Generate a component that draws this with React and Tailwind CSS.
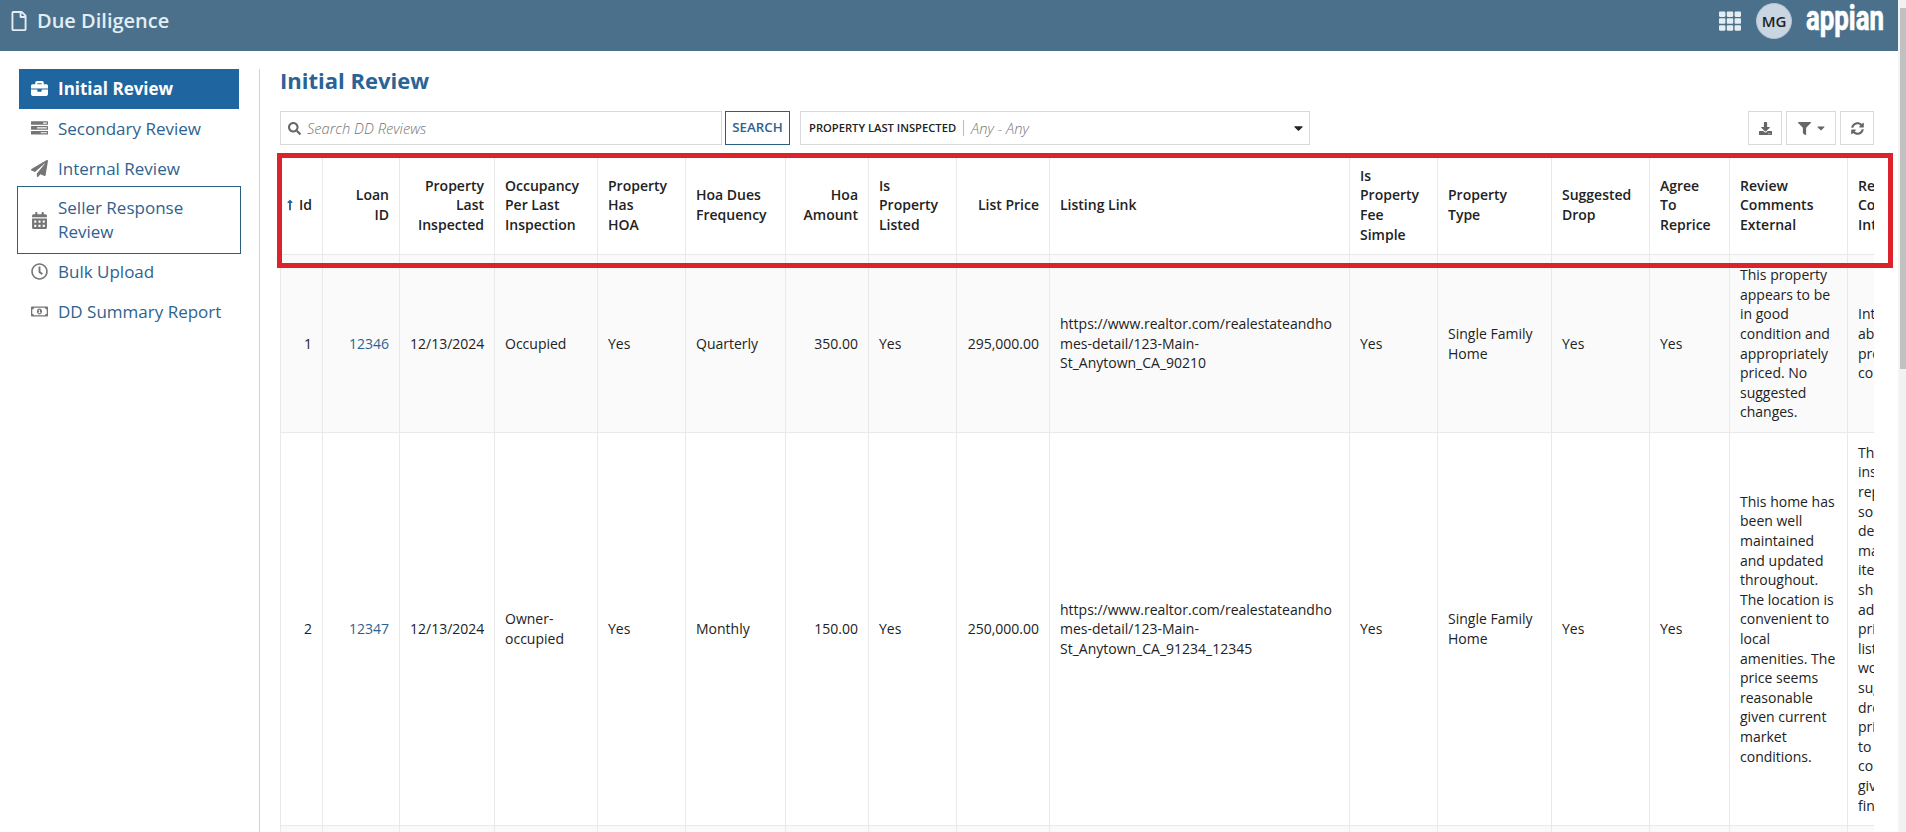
import {
  FaRegFile,
  FaBriefcase,
  FaPaperPlane,
  FaCalendarAlt,
  FaRegClock,
  FaRegMoneyBillAlt,
  FaSearch,
  FaDownload,
  FaFilter,
  FaCaretDown,
  FaSyncAlt,
  FaTh,
  FaLongArrowAltUp,
} from "react-icons/fa";

function TasksIcon({ className }) {
  return (
    <svg viewBox="0 0 1792 1792" className={className} fill="currentColor">
      <path d="M1024 1408h640v-128h-640v128zm-384-512h1024v-128h-1024v128zm640-512h384v-128h-384v128zm512 832v256q0 26-19 45t-45 19h-1664q-26 0-45-19t-19-45v-256q0-26 19-45t45-19h1664q26 0 45 19t19 45zm0-512v256q0 26-19 45t-45 19h-1664q-26 0-45-19t-19-45v-256q0-26 19-45t45-19h1664q26 0 45 19t19 45zm0-512v256q0 26-19 45t-45 19h-1664q-26 0-45-19t-19-45v-256q0-26 19-45t45-19h1664q26 0 45 19t19 45z" />
    </svg>
  );
}

const NAV = [
  { label: "Initial Review", icon: FaBriefcase, active: true },
  { label: "Secondary Review", icon: TasksIcon },
  { label: "Internal Review", icon: FaPaperPlane },
  { label: "Seller Response Review", icon: FaCalendarAlt, focused: true },
  { label: "Bulk Upload", icon: FaRegClock },
  { label: "DD Summary Report", icon: FaRegMoneyBillAlt },
];

const COLUMNS = [
  { head: ["Id"], width: 43, right: true, sorted: true },
  { head: ["Loan", "ID"], width: 77, right: true },
  { head: ["Property", "Last", "Inspected"], width: 95, right: true },
  { head: ["Occupancy", "Per Last", "Inspection"], width: 103 },
  { head: ["Property", "Has", "HOA"], width: 88 },
  { head: ["Hoa Dues", "Frequency"], width: 100 },
  { head: ["Hoa", "Amount"], width: 83, right: true },
  { head: ["Is", "Property", "Listed"], width: 88 },
  { head: ["List Price"], width: 93, right: true },
  { head: ["Listing Link"], width: 300 },
  { head: ["Is", "Property", "Fee", "Simple"], width: 88 },
  { head: ["Property", "Type"], width: 114 },
  { head: ["Suggested", "Drop"], width: 98 },
  { head: ["Agree", "To", "Reprice"], width: 80 },
  { head: ["Review", "Comments", "External"], width: 118 },
  { head: ["Review", "Comments", "Internal"], width: 118 },
];

const ROWS = [
  {
    style: "h-[178px] bg-[#fafafa]",
    cells: [
      ["1"],
      ["12346"],
      ["12/13/2024"],
      ["Occupied"],
      ["Yes"],
      ["Quarterly"],
      ["350.00"],
      ["Yes"],
      ["295,000.00"],
      ["https://www.realtor.com/realestateandho", "mes-detail/123-Main-", "St_Anytown_CA_90210"],
      ["Yes"],
      ["Single Family", "Home"],
      ["Yes"],
      ["Yes"],
      ["This property", "appears to be", "in good", "condition and", "appropriately", "priced. No", "suggested", "changes."],
      ["Internal note", "about", "property", "condition."],
    ],
  },
  {
    style: "h-[393px] bg-white",
    cells: [
      ["2"],
      ["12347"],
      ["12/13/2024"],
      ["Owner-", "occupied"],
      ["Yes"],
      ["Monthly"],
      ["150.00"],
      ["Yes"],
      ["250,000.00"],
      ["https://www.realtor.com/realestateandho", "mes-detail/123-Main-", "St_Anytown_CA_91234_12345"],
      ["Yes"],
      ["Single Family", "Home"],
      ["Yes"],
      ["Yes"],
      [
        "This home has", "been well", "maintained", "and updated", "throughout.", "The location is", "convenient to",
        "local", "amenities. The", "price seems", "reasonable", "given current", "market", "conditions.",
      ],
      [
        "The", "inspection", "reported", "some", "deferred", "maintenance", "items that", "should be", "addressed",
        "prior to", "listing. I", "would", "suggest", "dropping", "price", "to", "compensate", "given the", "findings.",
      ],
    ],
  },
  { style: "h-[178px] bg-[#fafafa]", cells: COLUMNS.map(() => []) },
];

function Lines({ lines }) {
  return lines.map((line, i) => (
    <span key={i} className="block whitespace-nowrap">
      {line}
    </span>
  ));
}

function Header() {
  return (
    <header className="flex h-[51px] shrink-0 items-start justify-between bg-[#4a708b] pl-[11px] pr-[14px] text-[#e4edf4]">
      <div className="flex h-[42px] items-center">
        <FaRegFile className="h-5 w-4" />
        <span className="ml-[10px] text-[20px] font-semibold leading-none">Due Diligence</span>
      </div>
      <div className="flex h-[42px] items-center">
        <FaTh className="h-[22px] w-[22px]" />
        <span className="ml-[15px] flex h-9 w-9 items-center justify-center rounded-full border border-[#b4c5d2] bg-[#c9d5e0] text-[15px] font-semibold text-[#222]">
          MG
        </span>
        <svg width="78" height="42" viewBox="0 0 78 42" className="ml-[14px] overflow-visible">
          <text
            x="0"
            y="29.5"
            textLength="78"
            lengthAdjust="spacingAndGlyphs"
            fill="#fff"
            stroke="#fff"
            strokeWidth="0.7"
            fontFamily="Roboto, sans-serif"
            fontWeight="700"
            fontSize="35"
          >
            appian
          </text>
        </svg>
      </div>
    </header>
  );
}

function Sidebar() {
  return (
    <nav className="w-[260px] shrink-0 border-r border-[#d2d2d2] pl-[19px] pr-5 text-[17px] leading-[23.8px] text-[#2f6290]">
      {NAV.map(({ label, icon: Icon, active, focused }) => (
        <a
          key={label}
          className={`flex items-center py-2 pl-3 pr-2 ${active ? "bg-[#1f659f] font-bold text-white" : ""} ${
            focused ? "outline outline-1 outline-offset-1 outline-[#2a5f7f]" : ""
          }`}
        >
          <Icon className={`h-[17px] w-[17px] shrink-0 ${active ? "" : "text-[#757575]"}`} />
          <span className="ml-[10px]">{label}</span>
        </a>
      ))}
    </nav>
  );
}

function Toolbar() {
  return (
    <div className="mr-6 mt-4 flex h-[34px] text-[14px] text-[#666]">
      <div className="flex w-[442px] items-center border border-[#d9d9d9] pl-[7px]">
        <FaSearch className="h-[13px] w-[13px]" />
        <span className="ml-[6px] text-[14.7px] font-light italic text-[#757575]">Search DD Reviews</span>
      </div>
      <button className="ml-[3px] w-[65px] border border-[#2a5f85] text-[13.3px] font-semibold text-[#2f6290]">
        SEARCH
      </button>
      <div className="ml-[10px] flex w-[510px] items-center border border-[#d9d9d9] pl-2 pr-[6px]">
        <span className="text-[11.2px] font-semibold text-[#222]">PROPERTY LAST INSPECTED</span>
        <span className="ml-[7px] h-4 border-l border-[#bbb]" />
        <span className="ml-[7px] text-[14.7px] font-light italic text-[#757575]">Any - Any</span>
        <FaCaretDown className="ml-auto h-[14px] w-[9px] text-[#222]" />
      </div>
      <div className="ml-auto flex gap-1">
        <button className="flex w-[34px] items-center justify-center border border-[#d9d9d9]">
          <FaDownload className="h-[13px] w-[13px]" />
        </button>
        <button className="flex w-[50px] items-center justify-center gap-[6px] border border-[#d9d9d9]">
          <FaFilter className="h-[13px] w-[13px]" />
          <FaCaretDown className="h-[12px] w-[8px]" />
        </button>
        <button className="flex w-[34px] items-center justify-center border border-[#d9d9d9]">
          <FaSyncAlt className="h-[13px] w-[13px]" />
        </button>
      </div>
    </div>
  );
}

function ReviewTable() {
  return (
    <div className="mr-6 mt-[11px] overflow-hidden">
      <table className="w-[1686px] table-fixed border-separate border-spacing-0 text-[14px] leading-[19.6px] text-[#222]">
        <colgroup>
          {COLUMNS.map((c, i) => (
            <col key={i} style={{ width: c.width }} />
          ))}
        </colgroup>
        <thead>
          <tr className="h-[99px]">
            {COLUMNS.map((c, i) => (
              <th
                key={i}
                className={`border-b border-r border-[#e9e9e9] px-[10px] py-0 align-middle font-semibold first:border-l first:pl-[6px] ${
                  c.right ? "text-right" : "text-left"
                }`}
              >
                {c.sorted ? (
                  <span className="flex items-center justify-between">
                    <FaLongArrowAltUp className="h-4 w-[6px] text-[#2a6496]" />
                    {c.head[0]}
                  </span>
                ) : (
                  <Lines lines={c.head} />
                )}
              </th>
            ))}
          </tr>
        </thead>
        <tbody>
          {ROWS.map((row, r) => (
            <tr key={r} className={row.style}>
              {row.cells.map((lines, i) => (
                <td
                  key={i}
                  className={`border-b border-r border-[#e9e9e9] px-[10px] py-0 align-middle first:border-l ${
                    COLUMNS[i].right ? "text-right" : "text-left"
                  } ${i === 1 ? "text-[#2f6290]" : ""}`}
                >
                  <Lines lines={lines} />
                </td>
              ))}
            </tr>
          ))}
        </tbody>
      </table>
    </div>
  );
}

export default function App() {
  return (
    <div className="relative flex h-[832px] w-[1906px] overflow-hidden bg-white font-['Open_Sans',sans-serif]">
      <div className="flex min-w-0 flex-1 flex-col">
        <Header />
        <div className="flex min-h-0 flex-1 pt-[18px]">
          <Sidebar />
          <main className="ml-5 min-w-0 flex-1">
            <h1 className="mt-[-3px] text-[22px] font-bold leading-[29px] text-[#2a6496]">Initial Review</h1>
            <Toolbar />
            <ReviewTable />
          </main>
        </div>
      </div>
      <div className="flex w-2 shrink-0 flex-col border-l-2 border-[#f4f4f4] bg-[#f1f1f1]">
        <div className="mt-2 h-[361px] bg-[#c1c1c1]" />
      </div>
      <div className="absolute left-[277px] top-[153px] h-[115px] w-[1616px] border-[5px] border-[#dc222b]" />
    </div>
  );
}
